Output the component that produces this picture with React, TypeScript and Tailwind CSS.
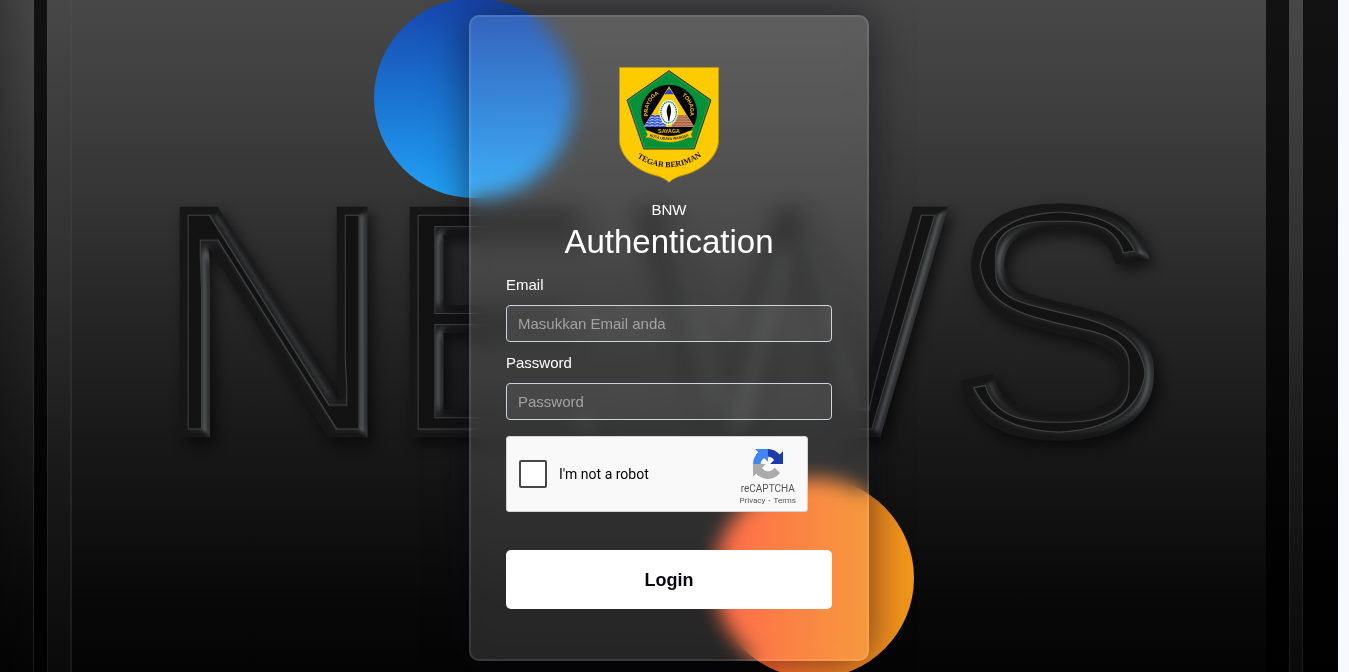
import { useState } from "react";
import type { FormEvent } from "react";

const LABEL = "block text-[15px] leading-6 text-white";
const FIELD =
  "mt-2 block h-[37px] w-full rounded border border-[#ced4da] bg-white/7 px-[11px] text-[15px] text-white placeholder:text-[#a3a3a3] focus:outline-none focus:ring-2 focus:ring-white/30";

function Backdrop() {
  return (
    <svg
      className="absolute inset-0 h-full w-full"
      viewBox="0 0 1338 672"
      preserveAspectRatio="none"
      aria-hidden="true"
    >
      <defs>
        <linearGradient id="wall" x1="0" y1="0" x2="0" y2="1">
          <stop offset="0" stopColor="#474747" />
          <stop offset="0.15" stopColor="#3f3f3f" />
          <stop offset="0.3" stopColor="#343434" />
          <stop offset="0.45" stopColor="#272727" />
          <stop offset="0.6" stopColor="#1c1c1c" />
          <stop offset="0.75" stopColor="#121212" />
          <stop offset="0.9" stopColor="#080808" />
          <stop offset="1" stopColor="#040404" />
        </linearGradient>
        <linearGradient id="fade" x1="0" y1="0" x2="1" y2="0">
          <stop offset="0" stopColor="#000000" stopOpacity="0.2" />
          <stop offset="1" stopColor="#000000" stopOpacity="0" />
        </linearGradient>
        <linearGradient id="groove" x1="0" y1="0" x2="0" y2="1">
          <stop offset="0" stopColor="#121212" />
          <stop offset="0.5" stopColor="#090909" />
          <stop offset="0.8" stopColor="#020202" />
          <stop offset="1" stopColor="#000000" />
        </linearGradient>
        <linearGradient id="strip" x1="0" y1="0" x2="0" y2="1">
          <stop offset="0" stopColor="#474747" />
          <stop offset="0.4" stopColor="#303030" />
          <stop offset="0.7" stopColor="#191919" />
          <stop offset="1" stopColor="#0a0a0a" />
        </linearGradient>
        <linearGradient id="rim" x1="0" y1="0" x2="0" y2="1">
          <stop offset="0" stopColor="#4a4a4a" />
          <stop offset="0.5" stopColor="#303030" />
          <stop offset="1" stopColor="#191919" />
        </linearGradient>
        <filter id="bevel" x="-5%" y="-10%" width="110%" height="125%" colorInterpolationFilters="sRGB">
          <feGaussianBlur in="SourceAlpha" stdDeviation="7" result="soft" />
          <feOffset in="soft" dx="5" dy="7" result="shift" />
          <feComponentTransfer in="shift" result="shadow">
            <feFuncA type="linear" slope="0.6" />
          </feComponentTransfer>
          <feGaussianBlur in="SourceAlpha" stdDeviation="4" result="bump" />
          <feSpecularLighting
            in="bump"
            surfaceScale="7"
            specularConstant="0.7"
            specularExponent="12"
            lightingColor="#585a5b"
            result="shine"
          >
            <feDistantLight azimuth="12" elevation="28" />
          </feSpecularLighting>
          <feComposite in="shine" in2="SourceAlpha" operator="in" result="shineIn" />
          <feMorphology in="SourceAlpha" operator="erode" radius="8" result="inner" />
          <feMorphology in="SourceAlpha" operator="erode" radius="9" result="core" />
          <feComposite in="inner" in2="core" operator="out" result="ring" />
          <feFlood floodColor="#3f4141" />
          <feComposite in2="ring" operator="in" result="contour" />
          <feFlood floodColor="#101010" floodOpacity="0.8" />
          <feComposite in2="core" operator="in" result="channel" />
          <feMerge>
            <feMergeNode in="shadow" />
            <feMergeNode in="SourceGraphic" />
            <feMergeNode in="shineIn" />
            <feMergeNode in="channel" />
            <feMergeNode in="contour" />
          </feMerge>
        </filter>
      </defs>
      <rect width="1338" height="672" fill="url(#wall)" />
      <rect width="34" height="672" fill="url(#fade)" />
      <rect x="34" width="14" height="672" fill="url(#groove)" />
      <rect x="33" width="1" height="672" fill="url(#rim)" />
      <rect x="48" width="24" height="672" fill="url(#strip)" />
      <rect x="47" width="1" height="672" fill="url(#rim)" />
      <rect x="70" width="2" height="672" fill="url(#rim)" />
      <rect x="1266" width="24" height="672" fill="url(#groove)" />
      <rect x="1289" width="14" height="672" fill="url(#strip)" />
      <rect x="1289" width="1" height="672" fill="url(#rim)" />
      <rect x="1302" width="1" height="672" fill="url(#rim)" />
      <rect x="1303" width="35" height="672" fill="url(#groove)" />
      <text
        x="154 384 635 947"
        y="436"
        fontFamily="Liberation Sans, Arial, sans-serif"
        fontSize="331"
        fill="#171718"
        stroke="#171718"
        strokeWidth="3"
        filter="url(#bevel)"
      >
        NEWS
      </text>
    </svg>
  );
}

function Crest() {
  return (
    <svg
      className="mx-auto block h-[116px] w-[100px]"
      viewBox="0 0 300 348"
      role="img"
      aria-label="Tegar Beriman"
    >
      <defs>
        <path id="motto" d="M46 266Q148 338 256 262" />
        <path id="arcLeft" d="M92 163A64 64 0 0 1 135 75" />
        <path id="arcRight" d="M170 76A64 64 0 0 1 207 167" />
        <path id="ribbonText" d="M86 205Q150 233 216 205" />
        <pattern id="waves" width="16" height="8" patternUnits="userSpaceOnUse">
          <rect width="16" height="8" fill="#c9d2ff" />
          <path d="M0 3Q4 0 8 3T16 3" fill="none" stroke="#2547c9" strokeWidth="5" />
        </pattern>
        <pattern id="bricks" width="12" height="8" patternUnits="userSpaceOnUse">
          <rect width="12" height="8" fill="#a4532b" />
          <path d="M0 0H12M0 4H12M3 0V4M9 4V8" stroke="#f2ddc8" strokeWidth="1" />
        </pattern>
      </defs>
      <path
        d="M1 1H299V215C299 275 240 312 195 324Q165 331 150 346Q135 331 105 324C60 312 1 275 1 215Z"
        fill="#fecb00"
        stroke="#b99610"
        strokeWidth="3"
      />
      <path d="M150 11L276 99L226 246H74L24 99Z" fill="#00913a" stroke="#3e3510" strokeWidth="3" />
      <path d="M150 16L271 101L223 243H77L29 101Z" fill="none" stroke="#caa91b" strokeWidth="1" />
      <circle cx="150" cy="137" r="84" fill="#050505" />
      <path d="M150 58L226 180H74Z" fill="#fecb00" />
      <path d="M150 64L164 82H136Z" fill="#2547c9" />
      <path d="M96 144H137L142 180H74Z" fill="url(#waves)" />
      <path d="M163 144H204L226 180H158Z" fill="url(#bricks)" />
      <ellipse cx="149" cy="136" rx="28" ry="38" fill="#fff" />
      <ellipse
        cx="149"
        cy="136"
        rx="23"
        ry="32"
        fill="none"
        stroke="#16803e"
        strokeWidth="4"
        strokeDasharray="4 2"
      />
      <path d="M151 110Q159 128 155 142Q152 150 151 163H148Q147 150 144 142Q140 125 151 110Z" fill="#080808" />
      <g fontFamily="Liberation Sans, Arial, sans-serif" fontWeight="700" fill="#fecb00">
        <text fontSize="16" textAnchor="middle">
          <textPath href="#arcLeft" startOffset="50%">PRAYOGA</textPath>
        </text>
        <text fontSize="16" textAnchor="middle">
          <textPath href="#arcRight" startOffset="50%">TOHAGA</textPath>
        </text>
        <text x="150" y="198" fontSize="16" textAnchor="middle">SAYAGA</text>
      </g>
      <path
        d="M78 190L90 192Q150 222 210 192L223 190L216 202L221 212L207 212Q150 240 93 212L80 212L86 202Z"
        fill="#fecb00"
        stroke="#8f6e00"
        strokeWidth="1"
      />
      <text fontFamily="Liberation Sans, Arial, sans-serif" fontWeight="700" fontSize="11" fill="#1b1500" textAnchor="middle">
        <textPath href="#ribbonText" startOffset="50%">KUTA UDAYA WANGSA</textPath>
      </text>
      <text fontFamily="Liberation Serif, Times New Roman, serif" fontWeight="700" fontSize="24" fill="#171200" textAnchor="middle">
        <textPath href="#motto" startOffset="50%">TEGAR BERIMAN</textPath>
      </text>
    </svg>
  );
}

function RecaptchaMark() {
  return (
    <svg className="h-[30px] w-[30px]" viewBox="0 0 64 64" aria-hidden="true">
      <path
        fill="#1c3aa9"
        d="M64 31.955l-.033-1.37V4.687l-7.16 7.16C50.948 4.674 42.033.093 32.05.093c-10.4 0-19.622 4.96-25.458 12.64l11.736 11.86a15.55 15.55 0 0 1 4.754-5.334c2.05-1.6 4.952-2.906 8.968-2.906.485 0 .86.057 1.135.163 4.976.393 9.288 3.14 11.828 7.124l-8.307 8.307L64 31.953"
      />
      <path
        fill="#4285f4"
        d="M31.862.094l-1.37.033H4.594l7.16 7.16C4.58 13.147 0 22.06 0 32.046c0 10.4 4.96 19.622 12.64 25.458L24.5 45.768a15.55 15.55 0 0 1-5.334-4.754c-1.6-2.05-2.906-4.952-2.906-8.968 0-.485.057-.86.163-1.135.393-4.976 3.14-9.288 7.124-11.828l8.307 8.307L31.86.095"
      />
      <path
        fill="#ababab"
        d="M.001 32.045l.033 1.37v25.898l7.16-7.16c5.86 7.173 14.774 11.754 24.76 11.754 10.4 0 19.622-4.96 25.458-12.64l-11.736-11.86a15.55 15.55 0 0 1-4.754 5.334c-2.05 1.6-4.952 2.906-8.968 2.906-.485 0-.86-.057-1.135-.163-4.976-.393-9.288-3.14-11.828-7.124l8.307-8.307c-10.522.04-22.4.066-27.295-.005"
      />
    </svg>
  );
}

function Recaptcha({ checked, onChange }: { checked: boolean; onChange: (v: boolean) => void }) {
  return (
    <div className="mt-4 flex h-[76px] w-[302px] max-w-full items-center justify-between rounded-[3px] border border-[#d3d3d3] bg-[#f9f9f9] pr-[11px] pl-3 font-['Roboto',sans-serif]">
      <div className="flex items-center gap-3">
        <input
          id="robot"
          type="checkbox"
          checked={checked}
          onChange={(e) => onChange(e.target.checked)}
          className="h-7 w-7 appearance-none rounded-xs border-2 border-[#484848] bg-white checked:bg-[#4285f4]"
        />
        <label htmlFor="robot" className="text-sm text-black">
          I'm not a robot
        </label>
      </div>
      <div className="flex flex-col items-center pt-2 text-[#555]">
        <RecaptchaMark />
        <p className="mt-1 text-[10px] leading-3">reCAPTCHA</p>
        <p className="flex gap-[3px] text-[8px] leading-3">
          <a href="#privacy">Privacy</a>
          <span>-</span>
          <a href="#terms">Terms</a>
        </p>
      </div>
    </div>
  );
}

export default function App() {
  const [email, setEmail] = useState("");
  const [password, setPassword] = useState("");
  const [robot, setRobot] = useState(false);

  function handleSubmit(e: FormEvent) {
    e.preventDefault();
  }

  return (
    <div className="min-h-screen bg-[#f8f8ff] pr-[11px] font-['Liberation_Sans',Arial,sans-serif]">
      <main className="relative flex min-h-screen items-center justify-center overflow-hidden bg-black pt-1">
        <Backdrop />
        <div className="relative w-[400px] max-w-full">
          <div className="absolute -top-[17px] -left-[95px] h-[200px] w-[200px] rounded-full bg-linear-to-b from-[#1845ad] to-[#23a2f6]" />
          <div className="absolute -right-[45px] -bottom-[17px] h-[200px] w-[200px] rounded-full bg-linear-to-r from-[#ff512f] to-[#f09819]" />
          <form
            onSubmit={handleSubmit}
            className="relative rounded-[10px] border-2 border-white/10 bg-white/13 px-[35px] py-[50px] shadow-[0_0_40px_rgba(8,7,16,0.6)] backdrop-blur-[10px]"
          >
            <Crest />
            <p className="mt-[15px] text-center text-[15px] leading-6 text-white">BNW</p>
            <h1 className="text-center text-[33px] leading-10 text-white">Authentication</h1>

            <label htmlFor="email" className={`mt-[11px] ${LABEL}`}>
              Email
            </label>
            <input
              id="email"
              type="email"
              placeholder="Masukkan Email anda"
              value={email}
              onChange={(e) => setEmail(e.target.value)}
              className={FIELD}
            />

            <label htmlFor="password" className={`mt-[9px] ${LABEL}`}>
              Password
            </label>
            <input
              id="password"
              type="password"
              placeholder="Password"
              value={password}
              onChange={(e) => setPassword(e.target.value)}
              className={FIELD}
            />

            <Recaptcha checked={robot} onChange={setRobot} />

            <button
              type="submit"
              className="mt-[38px] h-[59px] w-full cursor-pointer rounded-[5px] bg-white text-lg font-semibold text-[#080710]"
            >
              Login
            </button>
          </form>
        </div>
      </main>
    </div>
  );
}
